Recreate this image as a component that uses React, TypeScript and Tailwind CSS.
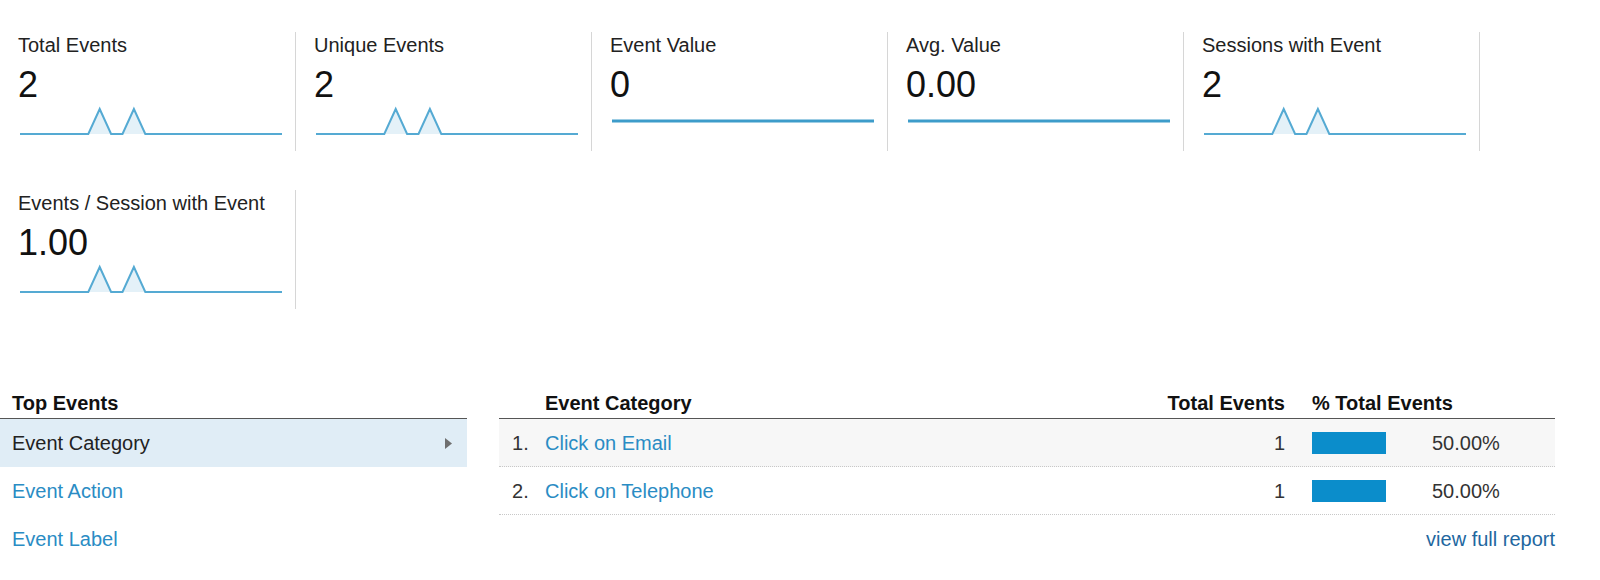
import React from "react";

// ────────────────────────────────────────────
// Data
// ────────────────────────────────────────────

type Metric = {
  label: string;
  value: string;
  series?: number[];
};

const spikes = Array.from({ length: 24 }, (_, i) => (i === 7 || i === 10 ? 1 : 0));

const metricsRow1: Metric[] = [
  { label: "Total Events", value: "2", series: spikes },
  { label: "Unique Events", value: "2", series: spikes },
  { label: "Event Value", value: "0" },
  { label: "Avg. Value", value: "0.00" },
  { label: "Sessions with Event", value: "2", series: spikes },
];

const metricsRow2: Metric[] = [
  { label: "Events / Session with Event", value: "1.00", series: spikes },
];

const topEventDims = ["Event Category", "Event Action", "Event Label"];

const rows = [
  { name: "Click on Email", total: 1, pct: 50 },
  { name: "Click on Telephone", total: 1, pct: 50 },
];

// ────────────────────────────────────────────
// Sparkline
// ────────────────────────────────────────────

const SPARK_W = 262;
const SPARK_H = 32;
const BASE_Y = 28;
const PEAK_Y = 3;

function Sparkline({ series }: { series?: number[] }) {
  if (!series) {
    return (
      <svg width={SPARK_W} height={SPARK_H} className="block">
        <line x1="0" y1="15" x2={SPARK_W} y2="15" stroke="#3d9cca" strokeWidth="3" />
      </svg>
    );
  }

  const step = SPARK_W / (series.length - 1);
  const pts = series.map((v, i) => `${(i * step).toFixed(1)},${v ? PEAK_Y : BASE_Y}`);
  const line = `M${pts.join(" L")}`;
  const area = `${line} L${SPARK_W},${BASE_Y} L0,${BASE_Y} Z`;

  return (
    <svg width={SPARK_W} height={SPARK_H} className="block">
      <path d={area} fill="#e4f1f8" />
      <path d={line} fill="none" stroke="#55aad3" strokeWidth="2" strokeLinejoin="miter" />
    </svg>
  );
}

// ────────────────────────────────────────────
// Metric card
// ────────────────────────────────────────────

function MetricCard({ metric }: { metric: Metric }) {
  return (
    <div className="w-[296px] h-[119px] border-r border-[#d6d6d6] pl-[18px] pt-[2px]">
      <div className="text-[20px] leading-[22px] text-[#222]">{metric.label}</div>
      <div className="text-[36px] leading-[36px] text-[#111] mt-[11px]">{metric.value}</div>
      <div className="ml-[2px] mt-[3px]">
        <Sparkline series={metric.series} />
      </div>
    </div>
  );
}

// ────────────────────────────────────────────
// Page
// ────────────────────────────────────────────

export default function App() {
  return (
    <div className="w-[1600px] h-[580px] bg-white pt-[32px] font-['Liberation_Sans',Arial,sans-serif] overflow-hidden">
      {/* Metric rows */}
      <div className="flex">
        {metricsRow1.map((m) => (
          <MetricCard key={m.label} metric={m} />
        ))}
      </div>
      <div className="flex mt-[39px]">
        {metricsRow2.map((m) => (
          <MetricCard key={m.label} metric={m} />
        ))}
      </div>

      {/* Top events */}
      <div className="flex mt-[79px]">
        {/* Dimension list */}
        <div className="w-[467px]">
          <div className="h-[31px] border-b border-[#555] pl-[12px] text-[20px] leading-[30px] font-bold text-[#111]">
            Top Events
          </div>
          {topEventDims.map((d, i) => (
            <div
              key={d}
              className={`h-[48px] flex items-center justify-between pl-[12px] pr-[15px] text-[20px] ${
                i === 0 ? "bg-[#e0edf6] text-[#222]" : "text-[#2a8cc4]"
              }`}
            >
              <span>{d}</span>
              {i === 0 && (
                <svg width="7" height="11" viewBox="0 0 7 11">
                  <path d="M0 0 L7 5.5 L0 11 Z" fill="#6f6f6f" />
                </svg>
              )}
            </div>
          ))}
        </div>

        {/* Table */}
        <div className="w-[1056px] ml-[32px] text-[20px]">
          <div className="h-[31px] border-b border-[#555] flex items-center font-bold text-[#111] leading-[30px]">
            <div className="w-[46px]" />
            <div className="flex-1">Event Category</div>
            <div className="w-[160px] text-right">Total Events</div>
            <div className="w-[270px] pl-[27px]">% Total Events</div>
          </div>

          {rows.map((r, i) => (
            <div
              key={r.name}
              className={`h-[48px] flex items-center border-b border-dotted border-[#c8c8c8] ${
                i === 0 ? "bg-[#f7f7f7]" : ""
              }`}
            >
              <div className="w-[46px] pl-[13px] text-[#333]">{i + 1}.</div>
              <div className="flex-1 text-[#2a8cc4]">{r.name}</div>
              <div className="w-[160px] text-right text-[#333]">{r.total}</div>
              <div className="w-[270px] pl-[27px] flex items-center">
                <div className="w-[74px] h-[22px] bg-[#0b8dcb]" />
                <span className="ml-[46px] text-[#333]">{r.pct.toFixed(2)}%</span>
              </div>
            </div>
          ))}

          <div className="h-[48px] flex items-center justify-end">
            <span className="text-[#22679f]">view full report</span>
          </div>
        </div>
      </div>
    </div>
  );
}
